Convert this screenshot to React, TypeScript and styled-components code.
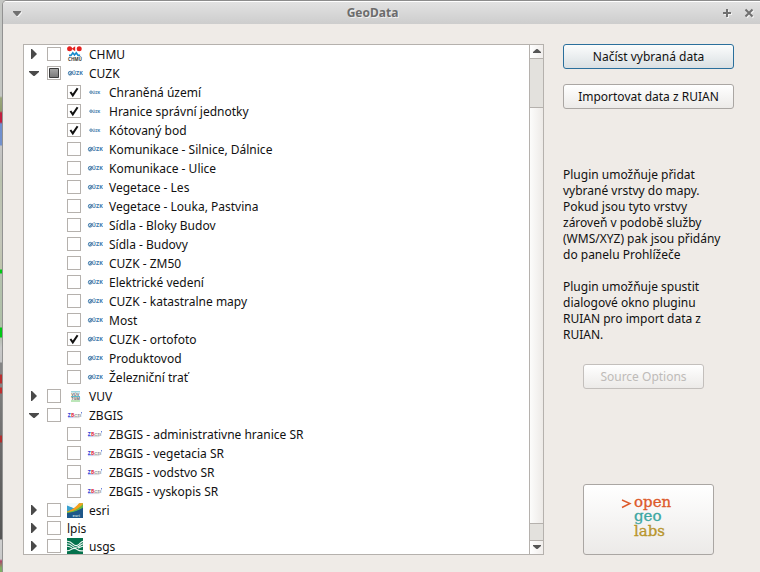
import React, { useEffect, useRef, useState } from 'react';
import styled, { createGlobalStyle, css } from 'styled-components';

const GlobalStyle = createGlobalStyle`
  *, *::before, *::after { box-sizing: border-box; }
  body {
    margin: 0;
    font: 12px/16px "Noto Sans", sans-serif;
    color: #111;
    background: #c9c9c7;
  }
  button { font: inherit; color: inherit; margin: 0; }
`;

const Desktop = styled.div`
  display: flex;
  height: 100vh;
  min-height: 400px;
  background: #c4c6c3;
`;

const MapEdge = styled.div`
  flex: 0 0 2px;
  background: linear-gradient(
    #c4c6c3 96px, #9aa67c 98px, #8f9c6e 111px, #c02040 113px, #c02040 122px,
    #6f8fd0 124px, #7391cc 145px, #c6c6c6 146px, #c2c2c0 160px, #b9c2ae 180px,
    #c4c6bb 240px, #bfc4ac 269px, #00c814 270px, #00c814 273px, #b4c2ae 274px,
    #b0c0a8 327px, #00c814 328px, #00c814 337px, #b4bdb0 338px, #c8c8c8 348px,
    #c4c4c4 362px, #858585 363px, #858585 374px, #b83030 375px, #b83030 383px,
    #858585 384px, #858585 387px, #c03030 388px, #c03030 393px, #7c7c7c 394px,
    #707070 435px, #b03030 436px, #b03030 442px, #6c6c6c 443px, #555 539px,
    #cfcfcf 540px, #c9c9c9 559px, #b04468 561px, #7fae64 568px
  );
`;

const Window = styled.section`
  flex: 1;
  min-width: 0;
  display: flex;
  flex-direction: column;
  background: #efebe7;
  border-top: 1px solid #8c8c8c;
  border-left: 1px solid #929292;
  border-radius: 5px 0 0 0;
  overflow: hidden;
`;

const TitleBar = styled.header`
  flex: 0 0 23px;
  display: grid;
  grid-template-columns: 50px 1fr 68px;
  align-items: center;
  border-top: 1px solid #fff;
  background: linear-gradient(#e2e2e2, #cdcdcd);
`;

const Title = styled.h1`
  margin: 0;
  font-size: 12px;
  line-height: 16px;
  font-weight: 700;
  text-align: center;
  color: #6c6c6c;
  text-shadow: 1px 1px 0 #f0f0f0;
`;

const WindowControls = styled.div<{ $end?: boolean }>`
  display: flex;
  gap: 10px;
  padding: 0 5px;
  justify-content: ${(p) => (p.$end ? 'flex-end' : 'flex-start')};
`;

const WindowButton = styled.button`
  width: 12px;
  height: 12px;
  padding: 0;
  border: 0;
  background: none;
  color: #707070;
  svg { display: block; filter: drop-shadow(1px 1px 0 #f2f2f2); }
`;

const Body = styled.main`
  flex: 1;
  min-height: 0;
  display: flex;
  gap: 19px;
  padding: 20px 26px 17px 20px;
`;

const TreeFrame = styled.div`
  flex: 1;
  min-width: 0;
  display: flex;
  border: 1px solid #b5b1ad;
  background: #fff;
`;

const Viewport = styled.div`
  flex: 1;
  min-width: 0;
  overflow: auto;
  scrollbar-width: none;
`;

const List = styled.ul<{ $nested?: boolean }>`
  list-style: none;
  margin: 0;
  padding: 0 0 0 ${(p) => (p.$nested ? 20 : 0)}px;
`;

const Row = styled.div<{ $short?: boolean }>`
  display: flex;
  align-items: center;
  height: ${(p) => (p.$short ? 17 : 19)}px;
  padding-left: 3px;
`;

const Expander = styled.button`
  width: 14px;
  height: 14px;
  margin-bottom: 1px;
  padding: 0;
  border: 0;
  background: none;
  svg { display: block; }
`;

const Indent = styled.span`
  width: 14px;
`;

const Check = styled.span`
  display: grid;
  margin: 0 6px 1px;
  > * { grid-area: 1 / 1; }
  svg { pointer-events: none; }
`;

const CheckInput = styled.input`
  appearance: none;
  width: 14px;
  height: 14px;
  margin: 0;
  border: 1px solid #b5b1ad;
  background: #fff;
`;

const RowLabel = styled.label`
  display: flex;
  align-items: center;
  white-space: nowrap;
`;

const IconSlot = styled.span`
  width: 16px;
  height: 16px;
  margin: 0 6px 1px 0;
  svg { display: block; }
`;

const ScrollColumn = styled.div`
  flex: 0 0 14px;
  display: flex;
  flex-direction: column;
  border-left: 1px solid #b5b1ad;
  background: #e3e1dd;
`;

const ScrollButton = styled.button<{ $down?: boolean }>`
  flex: 0 0 14px;
  display: grid;
  place-items: center;
  padding: 0;
  border: 0 solid #b5b1ad;
  ${(p) => (p.$down ? css`border-top-width: 1px;` : css`border-bottom-width: 1px;`)}
  background: linear-gradient(90deg, #fff, #f1eeec);
`;

const Groove = styled.div<{ $grow: number }>`
  flex: ${(p) => p.$grow} 1 0;
`;

const Thumb = styled.div`
  flex: 418 1 0;
  border: solid #b5b1ad;
  border-width: 1px 0;
  background: linear-gradient(90deg, #fcfcfb, #edeae7);
`;

const Side = styled.aside`
  flex: 0 0 171px;
  display: flex;
  flex-direction: column;
`;

const PushButton = styled.button<{ $primary?: boolean }>`
  height: 25px;
  padding: 0;
  border: 1px solid ${(p) => (p.$primary ? '#2a6f9c' : '#aaa6a3')};
  border-radius: 3px;
  background: ${(p) =>
    p.$primary ? 'linear-gradient(#fbfcfc, #dae0e3)' : 'linear-gradient(#fff, #eceae8)'};
  &:disabled { color: #bebbb8; border-color: #c3bfbc; }
`;

const MainActions = styled.div`
  display: flex;
  flex-direction: column;
  gap: 15px;
  margin-bottom: 58px;
`;

const Help = styled.div`
  display: flex;
  flex-direction: column;
  gap: 16px;
  margin-bottom: 21px;
  p { margin: 0; }
`;

const SourceButton = styled(PushButton)`
  margin: 0 30px 0 20px;
`;

const LogoButton = styled(PushButton)`
  height: 71px;
  margin: auto 20px 0 20px;
  display: grid;
  place-items: center;
`;

type IconName = 'chmu' | 'cuzk' | 'cuzkSmall' | 'vuv' | 'zbgis' | 'esri' | 'usgs';

const tiny = { fontFamily: 'Noto Sans, sans-serif', fontWeight: 700 };

function Icon({ name }: { name: IconName }) {
  const frame = { width: 16, height: 16, viewBox: '0 0 16 16', 'aria-hidden': true };
  switch (name) {
    case 'chmu':
      return (
        <svg {...frame}>
          <circle cx="2.6" cy="2.8" r="2.5" fill="#e52320" />
          <path d="M8.2.3v5L4.6 2.8z" fill="#e52320" />
          <circle cx="12.2" cy="2.8" r="2.5" fill="#e52320" />
          <path d="M2 9.4h2L5.8 6.8 7.500 9l1.800-2.200 1.800 2.600h2" fill="none" stroke="#1689cc" strokeWidth="1.6" />
          <text x="1" y="15.2" fontSize="4.5" fill="#333" {...tiny}>CHMÚ</text>
        </svg>
      );
    case 'cuzk':
      return (
        <svg {...frame}>
          <circle cx="3.2" cy="8.2" r="1.9" fill="#c5d8e8" stroke="#4f86b3" strokeWidth="1" />
          <path d="M2.400 10.200l2.600-3.600" stroke="#2d6797" strokeWidth="0.8" />
          <text x="4.8" y="10.4" fontSize="5.5" fill="#3a78ab" {...tiny}>ÚZK</text>
        </svg>
      );
    case 'cuzkSmall':
      return (
        <svg {...frame}>
          <circle cx="4" cy="8.2" r="1.3" fill="#a9c4da" stroke="#5d8cb2" strokeWidth="0.8" />
          <text x="5.2" y="9.700" fontSize="4" fill="#3a78ab" {...tiny}>ÚZK</text>
        </svg>
      );
    case 'vuv':
      return (
        <svg {...frame}>
          <path d="M4 3h9v1.5H4z" fill="#9fd7df" />
          <path d="M4 8.500h9" stroke="#5fbcc9" strokeWidth="1" />
          <text x="4.2" y="7.9" fontSize="4" fill="#666" {...tiny}>VÚV</text>
          <text x="4.2" y="12.2" fontSize="4" fill="#666" {...tiny}>TGM</text>
          <path d="M4 13h9" stroke="#8fd58a" strokeWidth="1.2" />
        </svg>
      );
    case 'zbgis':
      return (
        <svg {...frame}>
          <g fontSize="5" {...tiny}>
            <text x="0.800" y="9.8" fill="#2b3fd6">Z</text>
            <text x="4" y="9.8" fill="#e0304a">B</text>
          </g>
          <text x="7.2" y="9.8" fontSize="4.500" fontFamily="Liberation Serif, serif" fontStyle="italic" fill="#444">GIS</text>
          <path d="M1 10.600h5.500" stroke="#a9b2ee" strokeWidth="0.7" />
          <path d="M6.500 10.600h6" stroke="#c9c4c8" strokeWidth="0.7" />
          <path d="M14.500 5v1.500" stroke="#6c82d8" strokeWidth="1" />
        </svg>
      );
    case 'esri':
      return (
        <svg {...frame}>
          <path d="M0 1h16v15H0z" fill="#21598c" />
          <path d="M0 1h16v1.2L7.8 6.8 0 4.2z" fill="#f2fafc" />
          <path d="M0 3.5l7.5 3L0 9.8z" fill="#39a1cf" />
          <path d="M0 9.6c6-1 9.5-4 12.5-8.4H16v4.3C11 9.3 6 10 0 11.4z" fill="#65b846" />
          <path d="M0 9.4C5 8 9 5 12 1.2h4V2C11 7.7 5 9.7 0 10z" fill="#f6a01c" />
          <path d="M0 11c6-.4 11-2.2 16-5v10H0z" fill="#1d5789" />
          <text x="5.5" y="14.500" fontSize="4" fill="#b9cfdf" {...tiny}>esri</text>
        </svg>
      );
    case 'usgs':
      return (
        <svg {...frame}>
          <path d="M0 0h16v16H0z" fill="#04724d" />
          <g fill="none" stroke="#eef6f2" strokeWidth="1.1">
            <path d="M0 3.2c3-.2 4.4 1.2 6 2.9s4 1.9 6 .2 2.5-2.7 4-2.900" />
            <path d="M0 5.8c2.5 0 4 1 5.5 2.3s4.5 1.7 6.5.2 2.5-2.3 4-2.4" />
            <path d="M0 8.2c2 0 3.5.6 5 1.700M11 9.900c2 .1 3-1.5 5-1.7" />
            <path d="M0 12.8c2 0 3-.6 4.500-1.600s4-1 6 .5 3.500 1.200 5.500 1.200" />
          </g>
        </svg>
      );
  }
}

interface Layer {
  label: string;
  icon?: IconName;
  state?: 'on' | 'mixed';
  open?: boolean;
  children?: Layer[];
}

const cuzk = (label: string): Layer => ({ label, icon: 'cuzk' });
const cuzkSmall = (label: string): Layer => ({ label, icon: 'cuzkSmall', state: 'on' });
const zbgis = (label: string): Layer => ({ label: `ZBGIS - ${label}`, icon: 'zbgis' });

const layers: Layer[] = [
  { label: 'CHMU', icon: 'chmu' },
  {
    label: 'CUZK', icon: 'cuzk', state: 'mixed', open: true,
    children: [
      cuzkSmall('Chraněná území'),
      cuzkSmall('Hranice správní jednotky'),
      cuzkSmall('Kótovaný bod'),
      cuzk('Komunikace - Silnice, Dálnice'),
      cuzk('Komunikace - Ulice'),
      cuzk('Vegetace - Les'),
      cuzk('Vegetace - Louka, Pastvina'),
      cuzk('Sídla - Bloky Budov'),
      cuzk('Sídla - Budovy'),
      cuzk('CUZK - ZM50'),
      cuzk('Elektrické vedení'),
      cuzk('CUZK - katastralne mapy'),
      cuzk('Most'),
      { ...cuzk('CUZK - ortofoto'), state: 'on' },
      cuzk('Produktovod'),
      cuzk('Železniční trať'),
    ],
  },
  { label: 'VUV', icon: 'vuv' },
  {
    label: 'ZBGIS', icon: 'zbgis', open: true,
    children: [zbgis('administrativne hranice SR'), zbgis('vegetacia SR'), zbgis('vodstvo SR'), zbgis('vyskopis SR')],
  },
  { label: 'esri', icon: 'esri' },
  { label: 'lpis' },
  { label: 'usgs', icon: 'usgs' },
];

function LayerItem({ layer, id, nested }: { layer: Layer; id: string; nested?: boolean }) {
  const [open, setOpen] = useState(Boolean(layer.open));
  const [state, setState] = useState(layer.state);
  const input = useRef<HTMLInputElement>(null);

  useEffect(() => {
    if (input.current) input.current.indeterminate = state === 'mixed';
  }, [state]);

  return (
    <li>
      <Row $short={!layer.icon}>
        {nested ? (
          <Indent />
        ) : (
          <Expander type="button" aria-expanded={open} aria-label={`Rozbalit ${layer.label}`} onClick={() => setOpen(!open)}>
            <svg width="14" height="14" viewBox="0 0 14 14" fill="#4a4a4a" aria-hidden>
              <path d={open ? 'M2 5h10v1L7.5 10h-1L2 6z' : 'M4 2h1l4.5 4.5v1L5 12H4z'} />
            </svg>
          </Expander>
        )}
        <Check>
          <CheckInput
            ref={input}
            id={id}
            type="checkbox"
            checked={state === 'on'}
            onChange={(e) => setState(e.target.checked ? 'on' : undefined)}
          />
          {state === 'on' && (
            <svg width="14" height="14" viewBox="0 0 14 14" aria-hidden>
              <path d="M3.4 7L5.8 10.400 10.600 3.200" fill="none" stroke="#111" strokeWidth="2" />
            </svg>
          )}
          {state === 'mixed' && (
            <svg width="14" height="14" viewBox="0 0 14 14" aria-hidden>
              <defs>
                <linearGradient id="mixedFill" x2="0" y2="1">
                  <stop stopColor="#a8a8a8" />
                  <stop offset="1" stopColor="#777" />
                </linearGradient>
              </defs>
              <path d="M2.5 2.5h9v9h-9z" fill="url(#mixedFill)" stroke="#3c3c3c" />
            </svg>
          )}
        </Check>
        <RowLabel htmlFor={id}>
          {layer.icon && <IconSlot><Icon name={layer.icon} /></IconSlot>}
          {layer.label}
        </RowLabel>
      </Row>
      {open && layer.children && (
        <List $nested>
          {layer.children.map((child, i) => (
            <LayerItem key={child.label} layer={child} id={`${id}-${i}`} nested />
          ))}
        </List>
      )}
    </li>
  );
}

function Logo() {
  return (
    <svg width="56" height="56" viewBox="0 0 56 56" role="img" aria-label="open geo labs">
      <path d="M1 8l8 3.5-8 4" fill="none" stroke="#dd5a2b" strokeWidth="1.4" />
      <g fontFamily="DejaVu Serif, serif" fontSize="15" strokeWidth="0.3">
        <text x="13" y="15" fill="#dd5a2b" stroke="#dd5a2b">open</text>
        <text x="13" y="29" fill="#3da7a2" stroke="#3da7a2">geo</text>
        <text x="13" y="44" fill="#b8952c" stroke="#b8952c">labs</text>
      </g>
    </svg>
  );
}

export default function App() {
  const view = useRef<HTMLDivElement>(null);
  const scroll = (amount: number) => view.current?.scrollBy({ top: amount });

  return (
    <>
      <GlobalStyle />
      <Desktop>
        <MapEdge />
        <Window>
          <TitleBar>
            <WindowControls>
              <WindowButton type="button" aria-label="Nabídka okna">
                <svg width="18" height="12" viewBox="0 0 18 12" fill="currentColor"><path d="M5 4h8v1L9.5 9h-1L5 5z" /></svg>
              </WindowButton>
            </WindowControls>
            <Title>GeoData</Title>
            <WindowControls $end>
              <WindowButton type="button" aria-label="Maximalizovat">
                <svg width="12" height="12" viewBox="0 0 12 12" stroke="currentColor" strokeWidth="2"><path d="M6 2v8M2 6h8" /></svg>
              </WindowButton>
              <WindowButton type="button" aria-label="Zavřít">
                <svg width="12" height="12" viewBox="0 0 12 12" stroke="currentColor" strokeWidth="2"><path d="M2.5 2.5l7 7M9.5 2.5l-7 7" /></svg>
              </WindowButton>
            </WindowControls>
          </TitleBar>
          <Body>
            <TreeFrame>
              <Viewport ref={view}>
                <List>
                  {layers.map((layer, i) => (
                    <LayerItem key={layer.label} layer={layer} id={`layer-${i}`} />
                  ))}
                </List>
              </Viewport>
              <ScrollColumn>
                <ScrollButton type="button" aria-label="Posunout nahoru" onClick={() => scroll(-19)}>
                  <svg width="8" height="5" viewBox="0 0 8 5" fill="#555"><path d="M0 4V3l3.5-3h1L8 3v1z" /></svg>
                </ScrollButton>
                <Groove $grow={48} />
                <Thumb />
                <Groove $grow={16} />
                <ScrollButton type="button" $down aria-label="Posunout dolů" onClick={() => scroll(19)}>
                  <svg width="8" height="5" viewBox="0 0 8 5" fill="#555"><path d="M0 0v1l3.5 3h1L8 1V0z" /></svg>
                </ScrollButton>
              </ScrollColumn>
            </TreeFrame>
            <Side>
              <MainActions>
                <PushButton type="button" $primary>Načíst vybraná data</PushButton>
                <PushButton type="button">Importovat data z RUIAN</PushButton>
              </MainActions>
              <Help>
                <p>Plugin umožňuje přidat vybrané vrstvy do mapy. Pokud jsou tyto vrstvy zároveň v podobě služby (WMS/XYZ) pak jsou přidány do panelu Prohlížeče</p>
                <p>Plugin umožňuje spustit dialogové okno pluginu RUIAN pro import data z RUIAN.</p>
              </Help>
              <SourceButton type="button" disabled>Source Options</SourceButton>
              <LogoButton type="button"><Logo /></LogoButton>
            </Side>
          </Body>
        </Window>
      </Desktop>
    </>
  );
}
